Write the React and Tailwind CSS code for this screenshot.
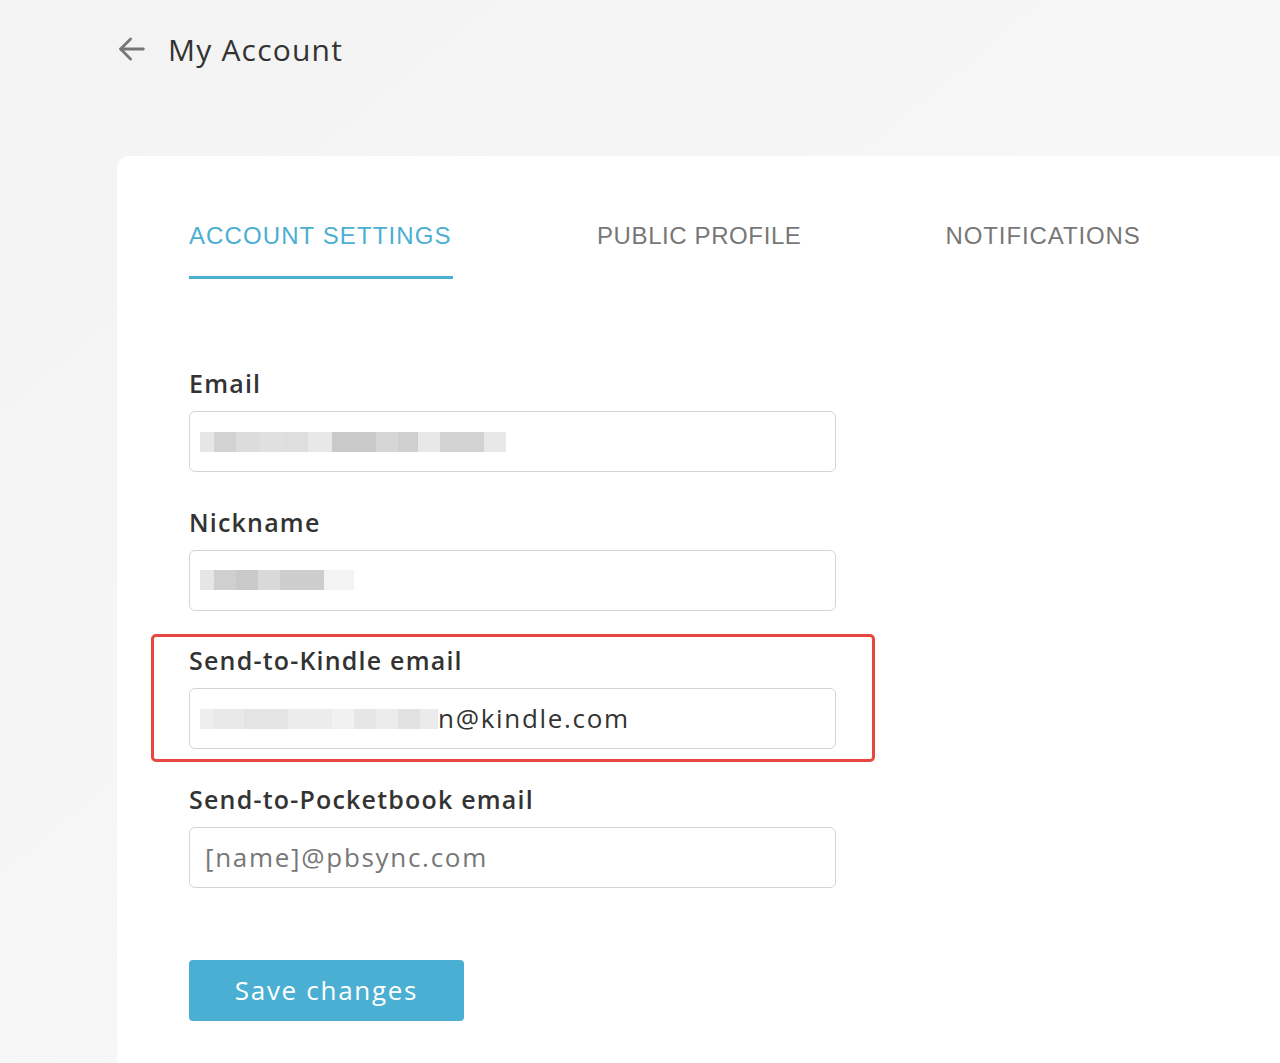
import React from 'react';

const sans = { fontFamily: '"Open Sans", "Noto Sans", sans-serif' };
const tabFont = { fontFamily: '"Liberation Sans", Arial, sans-serif' };

function Blur({ blocks }) {
  // pixelated stand-in for the blurred personal data
  return (
    <div className="flex items-center h-[34px]">
      {blocks.map((c, i) => (
        <div key={i} className="h-[20px]" style={{ width: c[0], backgroundColor: c[1] }} />
      ))}
    </div>
  );
}

function Field({ label, children }) {
  return (
    <div className="flex flex-col">
      <label className="text-[25px] leading-[24px] font-semibold text-[#333] tracking-[1.2px] mb-[16px]" style={sans}>
        {label}
      </label>
      <div className="w-[647px] h-[61px] border border-[#d4d4d4] rounded-[6px] bg-white flex items-center pl-[10px]">
        {children}
      </div>
    </div>
  );
}

export default function App() {
  return (
    <div className="min-h-[1063px] bg-gradient-to-br from-[#f3f3f3] to-[#fafafa] overflow-hidden" style={sans}>
      <div className="flex items-center pl-[115px] h-[98px]">
        <svg width="34" height="34" viewBox="0 0 24 24" fill="none" stroke="#777" strokeWidth="2" strokeLinecap="round" strokeLinejoin="round">
          <path d="M20 12H4" />
          <path d="M11 5l-7 7 7 7" />
        </svg>
        <h1 className="ml-[19px] text-[30px] text-[#333] font-normal tracking-[1.2px]">My Account</h1>
      </div>

      <div className="ml-[117px] mt-[58px] bg-white rounded-tl-[12px] min-h-[907px] pl-[72px] pt-[66px]">
        <div className="flex">
          <div className="flex flex-col w-[264px]">
            <span className="text-[24px] leading-[28px] text-[#4aafd3] tracking-[1.1px]" style={tabFont}>
              ACCOUNT SETTINGS
            </span>
            <div className="mt-[26px] h-[3px] bg-[#4aafd3]" />
          </div>
          <span className="ml-[144px] text-[24px] leading-[28px] text-[#777] tracking-[0.6px]" style={tabFont}>
            PUBLIC PROFILE
          </span>
          <span className="ml-[144px] text-[24px] leading-[28px] text-[#777] tracking-[0.9px]" style={tabFont}>
            NOTIFICATIONS
          </span>
        </div>

        <div className="mt-[92px] flex flex-col gap-[37.5px]">
          <Field label="Email">
            <Blur blocks={[[14, '#e6e6e6'], [22, '#d2d2d2'], [24, '#dcdcdc'], [24, '#e0e0e0'], [24, '#dedede'], [24, '#e8e8e8'], [44, '#c9c9c9'], [22, '#d6d6d6'], [20, '#cfcfcf'], [22, '#e8e8e8'], [44, '#d2d2d2'], [22, '#e8e8e8']]} />
          </Field>
          <Field label="Nickname">
            <Blur blocks={[[14, '#e6e6e6'], [22, '#cfcfcf'], [22, '#c9c9c9'], [22, '#d9d9d9'], [44, '#cdcdcd'], [30, '#f4f4f4']]} />
          </Field>
          <div className="relative">
            <div className="absolute left-[-38px] top-[-14px] w-[724px] h-[128px] border-[3px] border-[#e8473f] rounded-[5px] pointer-events-none" />
            <Field label="Send-to-Kindle email">
              <div className="flex items-center">
                <Blur blocks={[[14, '#eeeeee'], [30, '#e9e9e9'], [44, '#e4e4e4'], [44, '#ececec'], [22, '#f1f1f1'], [22, '#e6e6e6'], [22, '#ececec'], [22, '#e2e2e2'], [18, '#ebebeb']]} />
                <span className="text-[26px] tracking-[1.7px] text-[#333]">n@kindle.com</span>
              </div>
            </Field>
          </div>
          <Field label="Send-to-Pocketbook email">
            <span className="pl-[5px] text-[26px] tracking-[1.7px] text-[#777]">[name]@pbsync.com</span>
          </Field>
        </div>

        <button className="mt-[72px] w-[275px] h-[61px] bg-[#4aafd3] rounded-[4px] text-white text-[26px] tracking-[1.7px]" style={sans}>
          Save changes
        </button>
      </div>
    </div>
  );
}
